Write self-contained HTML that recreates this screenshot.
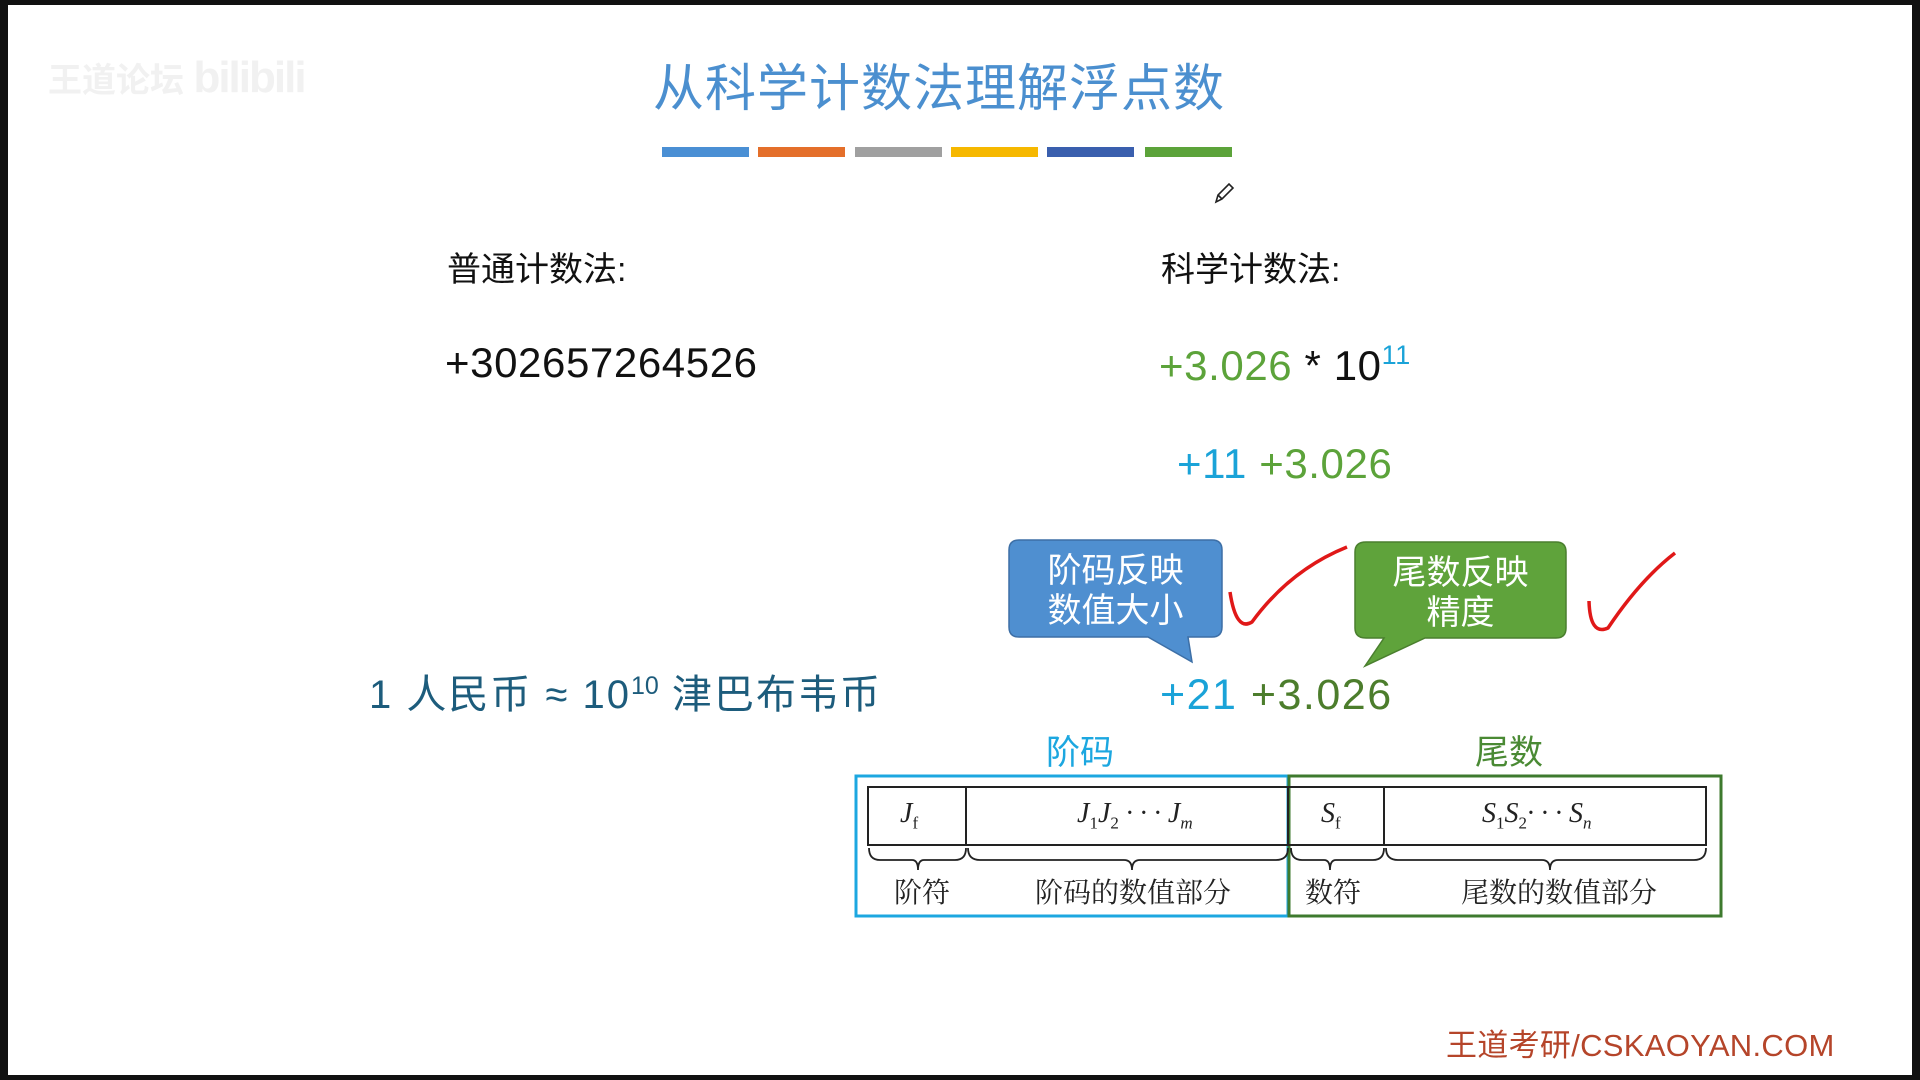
<!DOCTYPE html>
<html><head><meta charset="utf-8">
<style>
html,body{margin:0;padding:0}
body{width:1920px;height:1080px;background:#111;position:relative;overflow:hidden;font-family:"Liberation Sans","Noto Sans CJK SC",sans-serif}
#pg{position:absolute;left:8px;top:5px;width:1904px;height:1070px;background:#fff}
.t{position:absolute;white-space:nowrap;line-height:1}
.bar{position:absolute;top:147px;width:87px;height:10px}
.serif{font-family:"Liberation Serif","Noto Serif CJK SC",serif}
</style></head><body>
<div id="pg"></div>
<div class="t" style="left:48px;top:56px;font-size:34px;color:#f1f1f1;font-weight:bold">王道论坛 <span style="font-size:44px;letter-spacing:-2px">bilibili</span></div>

<div class="t" style="left:0;width:1878px;text-align:center;top:63px;font-size:51px;color:#4b8fcf;letter-spacing:1px">从科学计数法理解浮点数</div>
<div class="bar" style="left:662px;background:#4a8fd4"></div>
<div class="bar" style="left:758px;background:#e46f2a"></div>
<div class="bar" style="left:855px;background:#a0a0a0"></div>
<div class="bar" style="left:951px;background:#f6b800"></div>
<div class="bar" style="left:1047px;background:#3a5fae"></div>
<div class="bar" style="left:1145px;background:#5ca33a"></div>
<svg style="position:absolute;left:1212px;top:180px" width="26" height="26" viewBox="0 0 26 26"><path d="M4 22 L6 15 L17 4 L21 8 L10 19 Z M6 15 L10 19" fill="none" stroke="#222" stroke-width="1.6"/></svg>

<div class="t" style="left:447px;top:253px;font-size:34px;color:#111">普通计数法:</div>
<div class="t" style="left:1161px;top:253px;font-size:34px;color:#111">科学计数法:</div>
<div class="t" style="left:445px;top:342px;font-size:42px;color:#111;letter-spacing:0.6px">+302657264526</div>
<div class="t" style="left:1159px;top:342px;font-size:42px;color:#111;letter-spacing:0.6px"><span style="color:#5ca33a">+3.026</span> * 10<sup style="font-size:27px;color:#1aa3d8;vertical-align:16px">11</sup></div>
<div class="t" style="left:1177px;top:443px;font-size:42px;color:#5ca33a;letter-spacing:0.6px"><span style="color:#1aa3d8">+11</span> +3.026</div>

<svg style="position:absolute;left:0;top:0" width="1920" height="1080">
<path d="M1022 540 H1212 Q1222 540 1222 550 V627 Q1222 637 1212 637 H1188 L1192 662 L1148 637 H1019 Q1009 637 1009 627 V550 Q1009 540 1019 540 Z" fill="#4f8fd0" stroke="#3d6fa6" stroke-width="1.5"/>
<path d="M1366 542 H1556 Q1566 542 1566 552 V628 Q1566 638 1556 638 H1425 L1365 666 L1384 638 H1366 Q1355 638 1355 628 V552 Q1355 542 1366 542 Z" fill="#5fa33b" stroke="#4a7f2e" stroke-width="1.5"/>
<path d="M1230 592 Q1236 632 1252 622 Q1290 570 1347 547" fill="none" stroke="#e01818" stroke-width="3.5"/>
<path d="M1589 601 Q1590 636 1608 628 Q1640 580 1675 553" fill="none" stroke="#e01818" stroke-width="3.5"/>
<rect x="856" y="776" width="432" height="140" fill="none" stroke="#1ca7e0" stroke-width="3"/>
<rect x="1289" y="776" width="432" height="140" fill="none" stroke="#3e7a2e" stroke-width="3"/>
<rect x="868" y="787" width="838" height="58" fill="none" stroke="#222" stroke-width="2"/>
<line x1="966" y1="787" x2="966" y2="845" stroke="#222" stroke-width="2"/>
<line x1="1288" y1="787" x2="1288" y2="845" stroke="#222" stroke-width="2"/>
<line x1="1384" y1="787" x2="1384" y2="845" stroke="#222" stroke-width="2"/>
<g fill="none" stroke="#222" stroke-width="1.8">
<path d="M869 848 Q869 860 880 860 H912 Q918 860 918 870 Q918 860 924 860 H955 Q966 860 966 848"/>
<path d="M968 848 Q968 860 980 860 H1124 Q1132 860 1132 870 Q1132 860 1140 860 H1276 Q1288 860 1288 848"/>
<path d="M1291 848 Q1291 860 1302 860 H1324 Q1330 860 1330 870 Q1330 860 1336 860 H1373 Q1384 860 1384 848"/>
<path d="M1386 848 Q1386 860 1398 860 H1542 Q1550 860 1550 870 Q1550 860 1558 860 H1694 Q1706 860 1706 848"/>
</g>
</svg>
<div class="t" style="left:1009px;top:551px;width:213px;text-align:center;font-size:34px;color:#fff;line-height:40px">阶码反映<br>数值大小</div>
<div class="t" style="left:1355px;top:553px;width:211px;text-align:center;font-size:34px;color:#fff;line-height:40px">尾数反映<br>精度</div>

<div class="t" style="left:369px;top:674px;font-size:40px;color:#1d5c7c;letter-spacing:2px">1 人民币 ≈ 10<sup style="font-size:25px;vertical-align:14px;letter-spacing:0">10</sup> 津巴布韦币</div>
<div class="t" style="left:1160px;top:674px;font-size:43px;color:#4c7d2c;letter-spacing:1.5px"><span style="color:#1aa3d8">+21</span> +3.026</div>

<div class="t" style="left:1040px;top:736px;width:80px;text-align:center;font-size:34px;color:#1ca7e0">阶码</div>
<div class="t" style="left:1469px;top:736px;width:80px;text-align:center;font-size:34px;color:#4a8a34">尾数</div>

<div class="t serif" style="left:900px;top:800px;font-size:28px;font-style:italic;color:#222">J<sub style="font-size:17px;font-style:normal">f</sub></div>
<div class="t serif" style="left:1077px;top:800px;font-size:28px;font-style:italic;color:#222">J<sub style="font-size:17px;font-style:normal">1</sub>J<sub style="font-size:17px;font-style:normal">2</sub> · · · J<sub style="font-size:17px">m</sub></div>
<div class="t serif" style="left:1321px;top:800px;font-size:28px;font-style:italic;color:#222">S<sub style="font-size:17px;font-style:normal">f</sub></div>
<div class="t serif" style="left:1482px;top:800px;font-size:28px;font-style:italic;color:#222">S<sub style="font-size:17px;font-style:normal">1</sub>S<sub style="font-size:17px;font-style:normal">2</sub>· · · S<sub style="font-size:17px">n</sub></div>

<div class="t serif" style="left:872px;top:880px;width:100px;text-align:center;font-size:28px;color:#222">阶符</div>
<div class="t serif" style="left:1003px;top:880px;width:260px;text-align:center;font-size:28px;color:#222">阶码的数值部分</div>
<div class="t serif" style="left:1283px;top:880px;width:100px;text-align:center;font-size:28px;color:#222">数符</div>
<div class="t serif" style="left:1429px;top:880px;width:260px;text-align:center;font-size:28px;color:#222">尾数的数值部分</div>

<div class="t" style="left:1446px;top:1030px;font-size:31px;color:#b5452a;font-family:'Liberation Sans Narrow','Liberation Sans','Noto Sans CJK SC',sans-serif;letter-spacing:0.3px">王道考研/CSKAOYAN.COM</div>
</body></html>
